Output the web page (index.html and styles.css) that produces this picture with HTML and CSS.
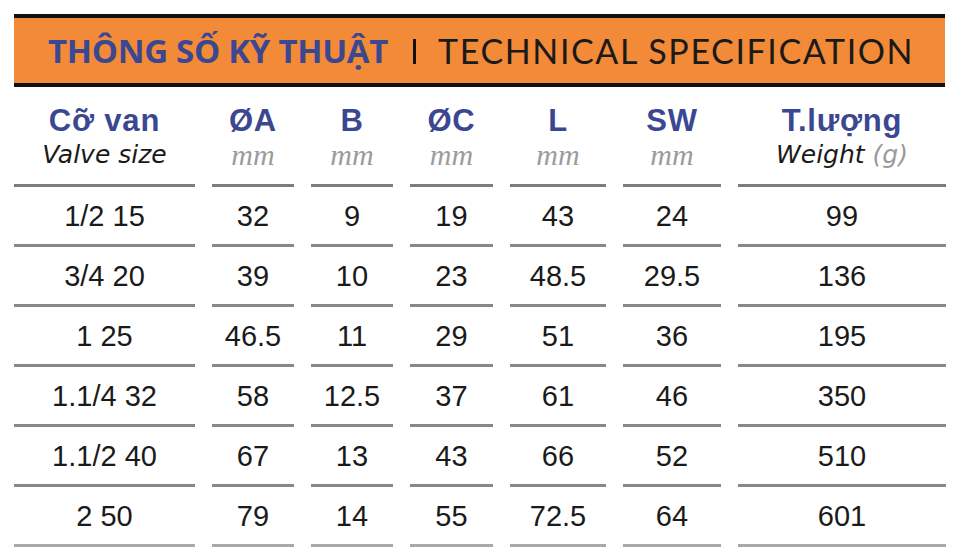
FILE: index.html
```html
<!DOCTYPE html>
<html lang="vi">
<head>
<meta charset="utf-8">
<title>Thông số kỹ thuật</title>
<link rel="stylesheet" href="styles.css">
</head>
<body>
<div class="sheet">
  <div class="banner">
    <span class="vn">THÔNG SỐ KỸ THUẬT</span>
    <span class="sep"></span>
    <span class="en">TECHNICAL SPECIFICATION</span>
  </div>
  <div class="table">
    <div class="th"><span class="t1">Cỡ van</span><span class="t2">Valve size</span></div>
    <div class="th"><span class="t1">ØA</span><span class="mm">mm</span></div>
    <div class="th"><span class="t1">B</span><span class="mm">mm</span></div>
    <div class="th"><span class="t1">ØC</span><span class="mm">mm</span></div>
    <div class="th"><span class="t1">L</span><span class="mm">mm</span></div>
    <div class="th"><span class="t1">SW</span><span class="mm">mm</span></div>
    <div class="th"><span class="t1">T.lượng</span><span class="t2">Weight <span class="g">(g)</span></span></div>

    <div class="td">1/2 15</div><div class="td">32</div><div class="td">9</div><div class="td">19</div><div class="td">43</div><div class="td">24</div><div class="td">99</div>
    <div class="td">3/4 20</div><div class="td">39</div><div class="td">10</div><div class="td">23</div><div class="td">48.5</div><div class="td">29.5</div><div class="td">136</div>
    <div class="td">1 25</div><div class="td">46.5</div><div class="td">11</div><div class="td">29</div><div class="td">51</div><div class="td">36</div><div class="td">195</div>
    <div class="td">1.1/4 32</div><div class="td">58</div><div class="td">12.5</div><div class="td">37</div><div class="td">61</div><div class="td">46</div><div class="td">350</div>
    <div class="td">1.1/2 40</div><div class="td">67</div><div class="td">13</div><div class="td">43</div><div class="td">66</div><div class="td">52</div><div class="td">510</div>
    <div class="td last">2 50</div><div class="td last">79</div><div class="td last">14</div><div class="td last">55</div><div class="td last">72.5</div><div class="td last">64</div><div class="td last">601</div>
  </div>
</div>
</body>
</html>
```
FILE: styles.css
```css
* { box-sizing: border-box; }
html, body { margin: 0; padding: 0; background: #ffffff; }
body { width: 960px; height: 560px; overflow: hidden; }

.sheet {
  padding: 14px 0 0 14px;
}

.banner {
  width: 931px;
  height: 73px;
  background: #f38a38;
  border-top: 4px solid #111111;
  border-bottom: 4px solid #111111;
  display: flex;
  align-items: center;
  padding-left: 34px;
}
.vn {
  font-family: "Open Sans", "Liberation Sans", sans-serif;
  font-weight: 700;
  font-size: 33px;
  color: #3b4891;
  letter-spacing: -0.3px;
  line-height: 1;
}
.sep {
  width: 3px;
  height: 25px;
  background: #111111;
  margin: 2px 22px 0 25px;
}
.en {
  font-family: Lato, "Liberation Sans", sans-serif;
  font-weight: 400;
  font-size: 34px;
  color: #1a1a1a;
  letter-spacing: 1.6px;
  line-height: 1;
}

.table {
  display: grid;
  grid-template-columns: 181px 82px 82px 83px 96px 98px 208px;
  column-gap: 17px;
}

.th {
  height: 100px;
  border-bottom: 3px solid #7d7d7d;
  display: flex;
  flex-direction: column;
  align-items: center;
  padding-top: 17px;
}
.t1 {
  font-family: "Liberation Sans", Arial, sans-serif;
  font-weight: 700;
  font-size: 31px;
  line-height: 34px;
  letter-spacing: 0.8px;
  color: #3b4891;
}
.t2 {
  font-family: "DejaVu Sans", sans-serif;
  font-style: italic;
  font-size: 25px;
  line-height: 30px;
  color: #1a1a1a;
  margin-top: 2px;
}
.g { color: #9a9a9a; }
.mm {
  font-family: "Liberation Serif", "Times New Roman", serif;
  font-style: italic;
  font-size: 30px;
  line-height: 30px;
  color: #9c9c9c;
  margin-top: 2px;
}

.td {
  height: 60px;
  border-bottom: 3px solid #888888;
  display: flex;
  align-items: center;
  justify-content: center;
  padding-top: 2px;
  font-family: "Liberation Sans", Arial, sans-serif;
  font-size: 29px;
  color: #1a1a1a;
}
.td.last { border-bottom-color: #a9a9a9; }
```
